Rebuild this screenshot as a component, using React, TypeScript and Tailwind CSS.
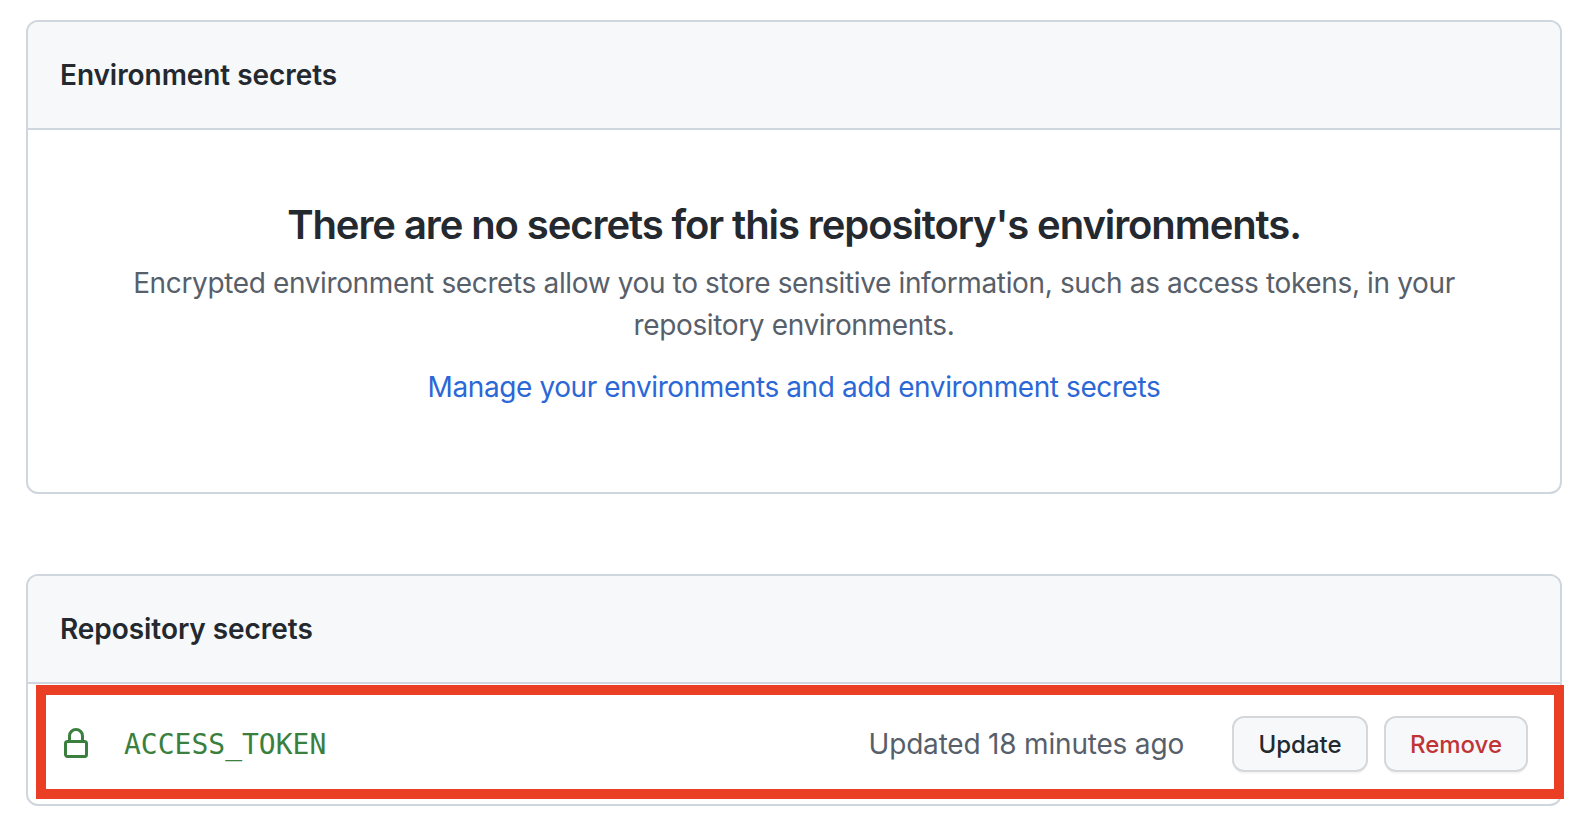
import type { ReactNode } from "react";

function LockIcon() {
  return (
    <svg viewBox="0 0 16 16" className="size-8 shrink-0 fill-[#3a7f3d]" aria-hidden="true">
      <path
        fillRule="evenodd"
        d="M4 4v2h-.25A1.75 1.75 0 002 7.75v5.5c0 .966.784 1.75 1.75 1.75h8.5A1.75 1.75 0 0014 13.25v-5.5A1.75 1.75 0 0012.25 6H12V4a4 4 0 10-8 0zm6.5 2V4a2.5 2.5 0 10-5 0v2h5zM12 7.5h.25a.25.25 0 01.25.25v5.5a.25.25 0 01-.25.25h-8.5a.25.25 0 01-.25-.25v-5.5a.25.25 0 01.25-.25H12z"
      />
    </svg>
  );
}

function Panel({ title, className, children }: { title: string; className: string; children: ReactNode }) {
  return (
    <section className={`flex flex-col overflow-hidden rounded-xl border-2 border-[#d0d6dd] ${className}`}>
      <header className="flex h-[108px] shrink-0 items-center border-b-2 border-[#d0d6dd] bg-[#f6f8fa] px-8">
        <h2 className="text-[28px] leading-[42px] font-semibold tracking-[-0.06px] text-[#24292f]">{title}</h2>
      </header>
      {children}
    </section>
  );
}

export default function App() {
  return (
    <main className="flex h-[828px] w-[1586px] flex-col gap-20 overflow-hidden bg-white pt-5 pl-[26px] font-['Inter',sans-serif]">
      <Panel title="Environment secrets" className="h-[474px] w-[1536px]">
        <div className="flex flex-col items-center pt-[65px] text-center text-[28px] leading-[42px] whitespace-nowrap text-[#57606a]">
          <h3 className="text-[40px] leading-[60px] font-semibold tracking-[-1.09px] text-[#24292f]">
            There are no secrets for this repository's environments.
          </h3>
          <p className="mt-[7px] tracking-[-0.365px]">
            Encrypted environment secrets allow you to store sensitive information, such as access tokens, in your
            <br />
            repository environments.
          </p>
          <a href="#" className="mt-5 tracking-[-0.41px] text-[#2c67d6]">
            Manage your environments and add environment secrets
          </a>
        </div>
      </Panel>

      <div className="relative w-[1536px]">
        <Panel title="Repository secrets" className="h-[232px] w-full">
          <div className="flex h-[120px] items-center px-8">
            <LockIcon />
            <code className="ml-8 pt-0.5 font-['DejaVu_Sans_Mono',monospace] text-[28px] leading-[42px] text-[#3a7f3d]">
              ACCESS_TOKEN
            </code>
            <span className="mr-12 ml-auto text-[28px] leading-[42px] tracking-[-0.19px] text-[#57606a]">
              Updated 18 minutes ago
            </span>
            <button className="h-14 w-[136px] rounded-xl border-2 border-[#d5d8da] bg-[#f6f8fa] pt-0.5 text-2xl leading-9 font-medium text-[#24292f] shadow-[0_2px_0_rgba(27,31,36,0.04)]">
              Update
            </button>
            <button className="ml-4 h-14 w-36 rounded-xl border-2 border-[#d5d8da] bg-[#f6f8fa] pt-0.5 text-2xl leading-9 font-medium text-[#c03437] shadow-[0_2px_0_rgba(27,31,36,0.04)]">
              Remove
            </button>
          </div>
        </Panel>
        <div className="pointer-events-none absolute top-[111px] left-[10px] h-[114px] w-[1528px] border-[10px] border-[#ea3f25]" />
      </div>
    </main>
  );
}
